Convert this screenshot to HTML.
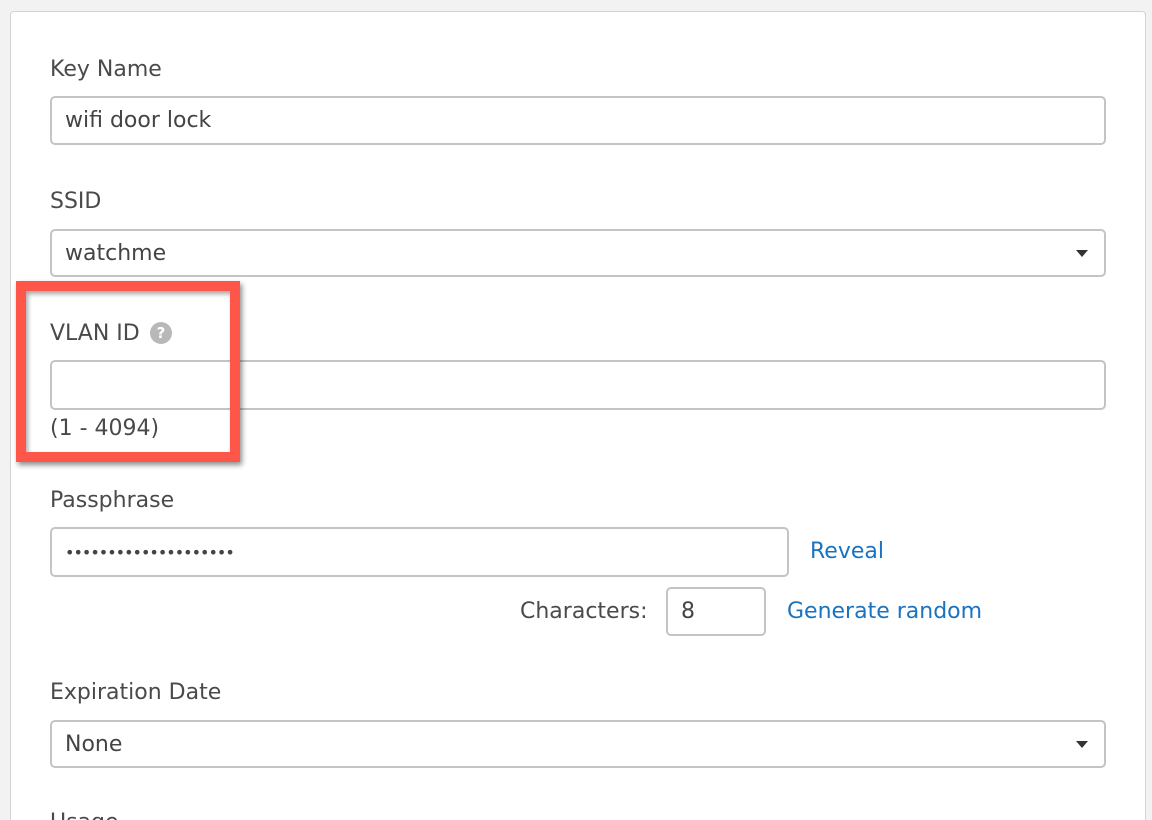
<!DOCTYPE html>
<html><head><style>
html,body{margin:0;width:1152px;height:820px;overflow:hidden}
body{background:#f2f2f2;font-family:"DejaVu Sans","Liberation Sans",sans-serif;color:#444;position:relative}
.panel{position:absolute;left:10px;top:11px;width:1134px;height:830px;background:#fff;border:1px solid #d4d4d4;border-radius:4px}
.a{position:absolute;white-space:nowrap}
.lbl{font-size:22px;color:#4a4a4a;line-height:1}
.in{position:absolute;background:#fff;border:2px solid #c4c4c4;border-radius:5px;box-sizing:border-box;font-size:22px;color:#444;padding-left:13px;display:flex;align-items:center}
.caret{position:absolute;right:16px;top:50%;margin-top:-3px;width:0;height:0;border-left:6px solid transparent;border-right:6px solid transparent;border-top:7px solid #333}
.link{color:#1a73c0;font-size:22px;line-height:1}
</style></head><body>
<div class="panel"></div>
<div class="a lbl" style="left:50px;top:59px">Key Name</div>
<div class="in" style="left:50px;top:96px;width:1056px;height:49px">wifi door lock</div>
<div class="a lbl" style="left:50px;top:191px">SSID</div>
<div class="in" style="left:50px;top:229px;width:1056px;height:48px">watchme<span class="caret"></span></div>
<div class="a lbl" style="left:50px;top:323px">VLAN ID</div>
<div class="a" style="left:150px;top:322px;width:22px;height:22px;border-radius:50%;background:#b8b8b8;color:#fff;font-size:15px;font-weight:bold;text-align:center;line-height:22px">?</div>
<div class="in" style="left:50px;top:360px;width:1056px;height:50px"></div>
<div class="a lbl" style="left:50px;top:418px">(1 - 4094)</div>
<div class="a" style="left:16px;top:281px;width:224px;height:181px;box-sizing:border-box;border:10px solid #fe574a;box-shadow:2px 3px 5px rgba(0,0,0,.45), inset 2px 3px 5px rgba(0,0,0,.35)"></div>
<div class="a lbl" style="left:50px;top:490px">Passphrase</div>
<div class="in" style="left:50px;top:527px;width:739px;height:50px;font-size:16px;letter-spacing:-1px">••••••••••••••••••••</div>
<div class="a link" style="left:810px;top:541px">Reveal</div>
<div class="a lbl" style="left:520px;top:601px">Characters:</div>
<div class="in" style="left:666px;top:587px;width:100px;height:49px">8</div>
<div class="a link" style="left:787px;top:601px">Generate random</div>
<div class="a lbl" style="left:50px;top:682px">Expiration Date</div>
<div class="in" style="left:50px;top:720px;width:1056px;height:48px">None<span class="caret"></span></div>
<div class="a lbl" style="left:50px;top:812px">Usage</div>
</body></html>
